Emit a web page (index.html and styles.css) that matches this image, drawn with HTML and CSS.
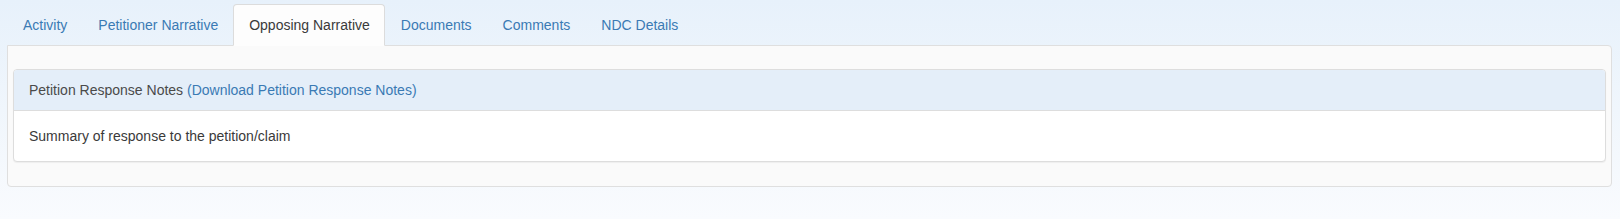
FILE: index.html
```html
<!DOCTYPE html>
<html lang="en">
<head>
<meta charset="UTF-8">
<meta name="viewport" content="width=device-width, initial-scale=1.0">
<title>Petition</title>
<link rel="stylesheet" href="styles.css">
</head>
<body>

<div class="page">
    <ul class="nav-tabs">
        <li><a href="#">Activity</a></li>
        <li><a href="#">Petitioner Narrative</a></li>
        <li class="active"><a href="#">Opposing Narrative</a></li>
        <li><a href="#">Documents</a></li>
        <li><a href="#">Comments</a></li>
        <li><a href="#">NDC Details</a></li>
    </ul>

    <div class="tab-content">
        <div class="panel">
            <div class="panel-heading">
                Petition Response Notes <a href="#">(Download Petition Response Notes)</a>
            </div>
            <div class="panel-body">
                Summary of response to the petition/claim
            </div>
        </div>
    </div>
</div>

</body>
</html>
```

FILE: styles.css
```css
html, body {
    height: 100%;
}
body {
    margin: 0;
    font-family: "Liberation Sans", Arial, sans-serif;
    font-size: 14px;
    line-height: 20px;
    color: #3a3a3a;
    background: linear-gradient(to bottom, #e7f1fb 0%, #f0f6fc 50%, #f9fbfe 100%);
}
a {
    color: #3a7ab4;
    text-decoration: none;
}
.page {
    padding: 4px 8px 0 7px;
}
.nav-tabs {
    display: flex;
    list-style: none;
    margin: 0;
    padding: 0;
}
.nav-tabs li {
    margin-bottom: -1px;
    position: relative;
}
.nav-tabs a {
    display: block;
    padding: 10px 14px 10px 15px;
    border: 1px solid transparent;
    border-radius: 4px 4px 0 0;
}
.nav-tabs li.active a {
    color: #3a3a3a;
    background-color: #fdfdfd;
    border-color: #dcdcdc;
    border-bottom-color: transparent;
}
.tab-content {
    background-color: #fafafa;
    border: 1px solid #dfdfdf;
    border-radius: 0 4px 4px 4px;
    padding: 23px 5px 4px 5px;
}
.panel {
    margin-bottom: 20px;
    background-color: #fff;
    border: 1px solid #dddddd;
    border-radius: 4px;
    box-shadow: 0 1px 1px rgba(0, 0, 0, 0.05);
}
.panel-heading {
    padding: 10px 15px;
    color: #4a4a4a;
    background-color: #e4eef9;
    border-bottom: 1px solid #dddddd;
    border-radius: 3px 3px 0 0;
}
.panel-body {
    padding: 15px;
}
```
